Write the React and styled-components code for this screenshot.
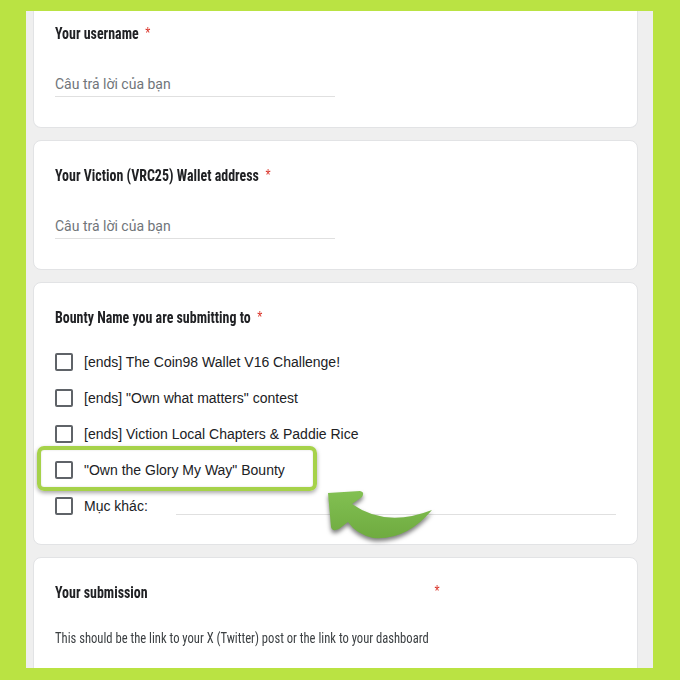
import React from 'react';
import styled, { createGlobalStyle } from 'styled-components';

const Global = createGlobalStyle`
  body {
    margin: 0;
    background: #bae343;
    font-family: "Liberation Sans", Arial, sans-serif;
  }
`;

// Green frame around the form
const Frame = styled.div`
  width: 680px;
  height: 680px;
  padding: 11px 27px 12px 26px;
  box-sizing: border-box;
`;

// Grey form background, cut off at top and bottom
const Sheet = styled.div`
  height: 657px;
  background: #efefef;
  padding: 0 15px 0 7px;
  overflow: hidden;
  display: flex;
  flex-direction: column;
  gap: 12px;
`;

const Card = styled.div`
  position: relative;
  flex-shrink: 0;
  background: #fff;
  border: 1px solid #e2e3e5;
  border-top: ${(p) => (p.cut ? 'none' : '1px solid #e2e3e5')};
  border-radius: ${(p) => (p.cut ? '0 0 8px 8px' : '8px')};
  padding: ${(p) => p.pt || '22px'} 21px ${(p) => p.pb || '30px'} 21px;
`;

// tall, narrow heading face: condensed font squeezed a bit more
const Title = styled.div`
  font-family: "Roboto Condensed", "Open Sans", "DejaVu Sans Condensed", sans-serif;
  font-stretch: 75%;
  font-weight: 700;
  font-size: 17px;
  line-height: 24px;
  height: 24px;
  color: #202124;
  transform: scaleX(0.82);
  transform-origin: left center;
`;

const Star = styled.span`
  color: #d93025;
  font-family: "Liberation Sans", Arial, sans-serif;
  font-weight: 400;
  font-size: 16px;
  line-height: 1;
  margin-left: 8px;
`;

const Answer = styled.div`
  margin-top: 29px;
  width: 280px;
  font-family: Roboto, "Liberation Sans", sans-serif;
  font-size: 14px;
  line-height: 20px;
  color: #70757a;
  padding-bottom: 2px;
  border-bottom: 1px solid #e0e0e0;
`;

const Options = styled.div`
  margin-top: 24px;
  display: flex;
  flex-direction: column;
  gap: 18px;
`;

const Option = styled.label`
  position: relative;
  display: flex;
  align-items: center;
  height: 18px;
  font-size: 14px;
  color: #202124;
  ${(p) =>
    p.marked &&
    `
    &::before {
      content: '';
      position: absolute;
      left: -18px;
      top: -15px;
      width: 272px;
      height: 37px;
      border: 4px solid #a6d24a;
      border-radius: 7px;
      box-shadow: 0 2px 4px rgba(0,0,0,0.35), inset 0 0 2px rgba(0,0,0,0.15);
    }
  `}
`;

const Box = styled.span`
  width: 14px;
  height: 14px;
  border: 2px solid #5f6368;
  border-radius: 2px;
  margin-right: 11px;
  flex-shrink: 0;
`;

const OtherLine = styled.span`
  flex: 1;
  margin-left: 28px;
  margin-top: 16px;
  border-bottom: 1px solid #e0e0e0;
`;

const Arrow = styled.svg`
  position: absolute;
  left: 287px;
  top: 203px;
  filter: drop-shadow(0 3px 2px rgba(0, 0, 0, 0.5));
`;

const SubmissionHead = styled(Title)`
  display: flex;
  align-items: center;
  width: 469px;
  justify-content: space-between;
`;

const Desc = styled.div`
  margin-top: 24px;
  font-family: "Roboto Condensed", "Open Sans", "DejaVu Sans Condensed", sans-serif;
  font-stretch: 75%;
  font-size: 15px;
  line-height: 20px;
  color: #3c4043;
  white-space: nowrap;
  transform: scaleX(0.84);
  transform-origin: left center;
`;

const options = [
  '[ends] The Coin98 Wallet V16 Challenge!',
  '[ends] "Own what matters" contest',
  '[ends] Viction Local Chapters & Paddie Rice',
  '"Own the Glory My Way" Bounty',
];

export default function App() {
  return (
    <Frame>
      <Global />
      <Sheet>
        <Card cut pt="10px">
          <Title>
            Your username<Star>*</Star>
          </Title>
          <Answer>Câu trả lời của bạn</Answer>
        </Card>
        <Card>
          <Title>
            Your Viction (VRC25) Wallet address<Star>*</Star>
          </Title>
          <Answer>Câu trả lời của bạn</Answer>
        </Card>
        <Card pb="29px">
          <Title>
            Bounty Name you are submitting to<Star>*</Star>
          </Title>
          <Options>
            {options.map((o, i) => (
              <Option key={i} marked={i === 3}>
                <Box />
                {o}
              </Option>
            ))}
            <Option>
              <Box />
              Mục khác:
              <OtherLine />
            </Option>
          </Options>
          <Arrow width="120" height="60" viewBox="320 485 120 60">
            <defs>
              <linearGradient id="arrowFill" x1="0" y1="0" x2="0" y2="1">
                <stop offset="0" stopColor="#82c052" />
                <stop offset="1" stopColor="#6fab40" />
              </linearGradient>
            </defs>
            <path
              d="M327 492 L359 490 Q364 491 361 496 L351 503 Q385 527 431 509 Q405 540 372 537 Q355 533 347 521 L338 528 Q331 531 330 526 Z"
              fill="url(#arrowFill)"
            />
          </Arrow>
        </Card>
        <Card pt="22px">
          <SubmissionHead>
            Your submission<Star>*</Star>
          </SubmissionHead>
          <Desc>This should be the link to your X (Twitter) post or the link to your dashboard</Desc>
        </Card>
      </Sheet>
    </Frame>
  );
}
